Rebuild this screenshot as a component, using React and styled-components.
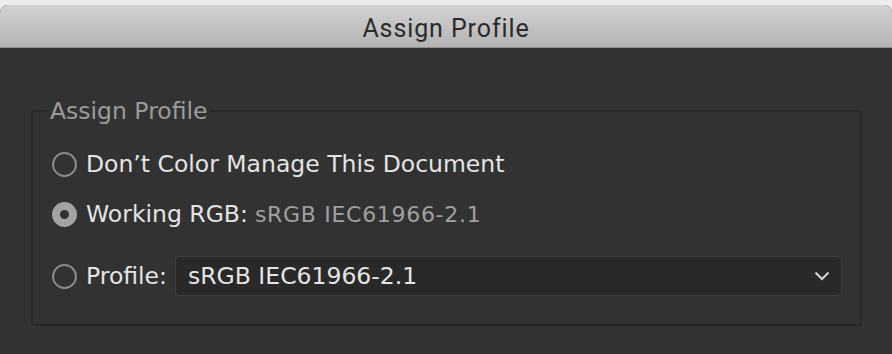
import styled, { createGlobalStyle } from 'styled-components';

const GlobalStyle = createGlobalStyle`
    html, body {
        margin: 0;
        padding: 0;
        background: #ededed;
    }
    body {
        font-family: "DejaVu Sans", "Liberation Sans", sans-serif;
    }
`;

const Page = styled.div`
    width: 892px;
    height: 354px;
    padding-top: 5px;
    box-sizing: border-box;
    overflow: hidden;
`;

const Window = styled.div`
    display: flex;
    flex-direction: column;
    height: 100%;
    border-radius: 8px 8px 0 0;
    overflow: hidden;
    background: #323232;
`;

const TitleBar = styled.div`
    height: 43px;
    flex-shrink: 0;
    display: flex;
    align-items: center;
    justify-content: center;
    padding-top: 4px;
    background: linear-gradient(#d3d3d3, #b3b3b3);
    border-bottom: 1px solid #8f8f8f;
    box-sizing: border-box;
    font-family: Roboto, "Liberation Sans", sans-serif;
    font-size: 25px;
    color: #2b2b2b;
    letter-spacing: 0.9px;
`;

const Body = styled.div`
    flex: 1;
    padding: 50px 30px 0 31px;
`;

const Group = styled.fieldset`
    margin: 0;
    padding: 24px 18px 27px 19px;
    border: 2px solid #282828;
    border-radius: 4px;
    display: flex;
    flex-direction: column;
    min-width: 0;
`;

const Legend = styled.legend`
    margin-left: -4px;
    padding: 0 2px;
    font-size: 23.5px;
    color: #9b9b9b;
    line-height: 26px;
`;

const Row = styled.label`
    display: flex;
    align-items: center;
    height: ${({ $height }) => $height || 32}px;
    margin-top: ${({ $top }) => $top || 0}px;
    font-size: 23.5px;
    color: #e4e4e4;
    white-space: nowrap;
`;

const Radio = styled.span`
    width: 25px;
    height: 25px;
    flex-shrink: 0;
    box-sizing: border-box;
    border-radius: 50%;
    margin-right: 9px;
    display: flex;
    align-items: center;
    justify-content: center;
    border: 2px solid ${({ $checked }) => ($checked ? '#a3a3a3' : '#8c8c8c')};
    background: ${({ $checked }) => ($checked ? '#a3a3a3' : 'transparent')};

    &::after {
        content: '';
        display: ${({ $checked }) => ($checked ? 'block' : 'none')};
        width: 9px;
        height: 9px;
        border-radius: 50%;
        background: #2f2f2f;
    }
`;

const Value = styled.span`
    margin-left: 7px;
    font-size: 22px;
    letter-spacing: 0.7px;
    color: #a0a0a0;
`;

const Select = styled.div`
    flex: 1;
    height: 40px;
    margin-left: 8px;
    box-sizing: border-box;
    display: flex;
    align-items: center;
    justify-content: space-between;
    padding: 0 11px 0 12px;
    background: #292929;
    border: 1px solid #3d3d3d;
    border-radius: 5px;
    font-size: 23.5px;
    color: #e4e4e4;
`;

function Chevron() {
    return (
        <svg width="16" height="10" viewBox="0 0 16 10">
            <path d="M1.5 1.5 L8 8 L14.5 1.5" fill="none" stroke="#d6d6d6" strokeWidth="2" />
        </svg>
    );
}

export default function App() {
    return (
        <Page>
            <GlobalStyle />
            <Window>
                <TitleBar>Assign Profile</TitleBar>
                <Body>
                    <Group>
                        <Legend>Assign Profile</Legend>
                        <Row>
                            <Radio />
                            Don’t Color Manage This Document
                        </Row>
                        <Row $top={18}>
                            <Radio $checked />
                            Working RGB:
                            <Value>sRGB IEC61966-2.1</Value>
                        </Row>
                        <Row $top={25} $height={42}>
                            <Radio />
                            Profile:
                            <Select>
                                sRGB IEC61966-2.1
                                <Chevron />
                            </Select>
                        </Row>
                    </Group>
                </Body>
            </Window>
        </Page>
    );
}
